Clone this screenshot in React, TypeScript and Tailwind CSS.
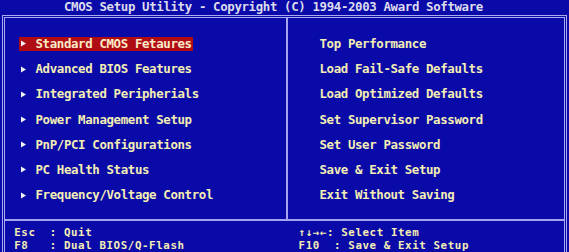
import React from 'react'

const leftItems = [
  'Standard CMOS Fetaures',
  'Advanced BIOS Features',
  'Integrated Peripherials',
  'Power Management Setup',
  'PnP/PCI Configurations',
  'PC Health Status',
  'Frequency/Voltage Control',
]

const rightItems = [
  'Top Performance',
  'Load Fail-Safe Defaults',
  'Load Optimized Defaults',
  'Set Supervisor Password',
  'Set User Password',
  'Save & Exit Setup',
  'Exit Without Saving',
]

function Arrow() {
  return (
    <svg width="5" height="7" viewBox="0 0 5 7" className="shrink-0">
      <polygon points="0,0.5 5,3.5 0,6.5" fill="#f2f2f6" />
    </svg>
  )
}

export default function App() {
  return (
    <div className="w-[569px] h-[252px] overflow-hidden bg-[#0a0aa8] font-['DejaVu_Sans_Mono',monospace] font-bold text-[12.4px] tracking-[-0.36px] text-[#f4eeb4] whitespace-pre">
      {/* title */}
      <div className="h-[15px] leading-[13px] pl-[64px] text-[#dcdcec]">
        CMOS Setup Utility - Copyright (C) 1994-2003 Award Software
      </div>

      {/* frame */}
      <div className="ml-[2px] w-[565px] h-[240px] border-[3px] border-b-0 border-double border-[#aaaaf2]">
        <div className="flex h-[201px]">
          <div className="w-[281px] pt-[13.4px]">
            {leftItems.map((item, i) => (
              <div key={item} className="h-[25.2px] flex items-center pl-[14px]">
                <div className={`flex items-center h-[14px] pl-[1.7px] pr-[1px] ${i === 0 ? 'bg-[#b00c14]' : ''}`}>
                  <Arrow />
                  <span className={`ml-[9.8px] leading-[14px] ${i === 0 ? 'text-[#fbecc8]' : ''}`}>{item}</span>
                </div>
              </div>
            ))}
          </div>
          <div className="w-[2px] bg-[#a4a4f0]" />
          <div className="flex-1 pt-[13.4px] pl-[31.5px]">
            {rightItems.map((item) => (
              <div key={item} className="h-[25.2px] flex items-center leading-[14px]">
                {item}
              </div>
            ))}
          </div>
        </div>

        <div className="h-[2px] bg-[#a4a4f0]" />

        {/* footer */}
        <div className="pt-[6px] pl-[9.2px] leading-[12.6px] text-[10.8px] tracking-[0.6px]">
          <div className="flex">
            <div className="w-[284.4px]">Esc  : Quit</div>
            <div>↑↓→←: Select Item</div>
          </div>
          <div className="flex">
            <div className="w-[284.4px]">F8   : Dual BIOS/Q-Flash</div>
            <div>F10  : Save &amp; Exit Setup</div>
          </div>
        </div>
      </div>
    </div>
  )
}
